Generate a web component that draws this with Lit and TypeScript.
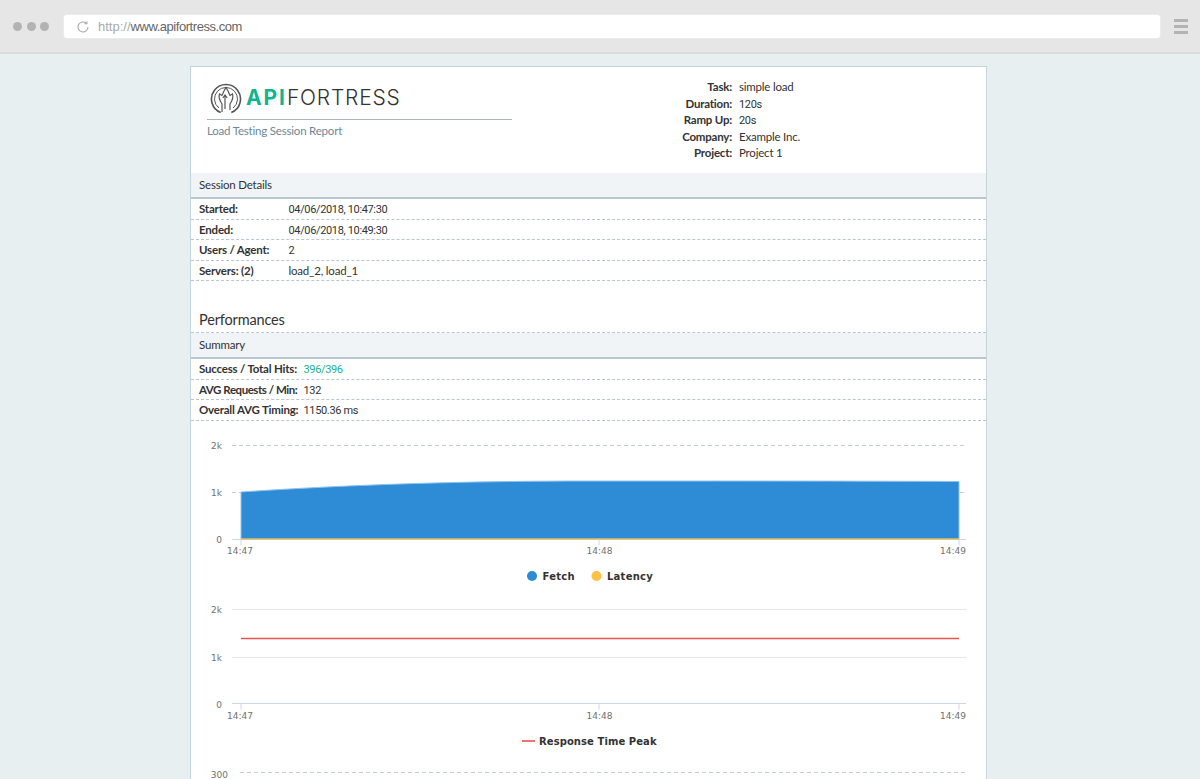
import { LitElement, html, css, svg } from "lit";
import { customElement } from "lit/decorators.js";

const SessionRows = [
  ["Started:", "04/06/2018, 10:47:30", true],
  ["Ended:", "04/06/2018, 10:49:30", true],
  ["Users / Agent:", "2", true],
  ["Servers: (2)", "load_2, load_1", false],
];
const Meta = [
  ["Task:", "simple load", false],
  ["Duration:", "120s", true],
  ["Ramp Up:", "20s", true],
  ["Company:", "Example Inc.", false],
  ["Project:", "Project 1", false],
];

const xTicks = (axisY: number) =>
  [
    [241, "14:47", 240],
    [599, "14:48", 599.5],
    [959, "14:49", 953],
  ].map(
    ([x, label, tx]) => svg`
    <line x1=${x} x2=${x} y1=${axisY} y2=${axisY + 6} stroke="#ccd6eb"/>
    <text class="tick" x=${tx} y=${axisY + 15} text-anchor="middle">${label}</text>`
  );

@customElement("app-root")
export class AppRoot extends LitElement {
  static styles = css`
    :host {
      display: block;
      height: 779px;
      overflow: hidden;
      background: #e7eff1;
      font-family: "Lato", "Open Sans", sans-serif;
    }
    .browser {
      height: 54px;
      box-sizing: border-box;
      background: #e6e6e6;
      border-bottom: 2px solid #dcdcdc;
      display: flex;
      align-items: center;
      padding: 1px 12px 0 13px;
    }
    .dots { display: flex; gap: 4.5px; width: 51px; margin-top: -1px; }
    .dots i { width: 9px; height: 9px; border-radius: 50%; background: #b3b3b3; }
    .url {
      flex: 1;
      height: 23px;
      background: #fff;
      border-radius: 3px;
      box-shadow: 0 0 0 1px #ececec;
      display: flex;
      align-items: center;
      gap: 8px;
      padding-left: 12px;
      font: 13px "Liberation Sans", Arial, sans-serif;
      color: #666;
    }
    .url svg { display: block; }
    .url span { color: #aaa; }
    .url em { font-style: normal; letter-spacing: -0.45px; }
    .burger { width: 14px; margin-left: 14px; display: flex; flex-direction: column; gap: 3px; }
    .burger i { height: 3px; background: #b3b3b3; }
    .report {
      width: 797px;
      box-sizing: border-box;
      margin: 12px 0 0 190px;
      background: #fff;
      border: 1px solid #c5d5da;
      font-size: 11.5px;
      letter-spacing: -0.2px;
      color: #333;
    }
    .top { height: 106px; display: flex; }
    .brand { width: 305px; margin-left: 16px; padding-top: 13px; }
    .logo {
      height: 37px;
      display: flex;
      align-items: center;
      gap: 4px;
      padding: 0 0 2px 3px;
      border-bottom: 1px solid #a9b4ba;
    }
    .word {
      font: 300 21px "Inter", sans-serif;
      letter-spacing: 0.8px;
      color: #333;
      padding-bottom: 3px;
    }
    .word b { font-weight: 700; color: #0fb58f; letter-spacing: 1.9px; }
    .sub { margin-top: 4px; color: #6f8797; }
    .meta {
      margin-left: 144px;
      padding-top: 12px;
      display: grid;
      grid-template-columns: 76px auto;
      column-gap: 7px;
      grid-auto-rows: 16.6px;
      align-content: start;
      align-items: baseline;
      line-height: 16.6px;
    }
    .meta b { text-align: right; }
    .band {
      height: 24px;
      line-height: 24px;
      padding-left: 8px;
      background: #f0f4f7;
      border-bottom: 2px solid #b8c6cd;
    }
    .row {
      height: 20.5px;
      box-sizing: border-box;
      line-height: 19px;
      padding-left: 8px;
      border-bottom: 1px dashed #b8c6cd;
      display: flex;
      align-items: baseline;
    }
    .row b { flex: none; }
    .session b { width: 89.5px; }
    .summary b { width: 104.5px; }
    .summary b.tight { letter-spacing: -0.46px; }
    .num { font-family: "Roboto", sans-serif; font-size: 11px; letter-spacing: -0.35px; }
    .good { color: #15b48f; }
    h2 {
      margin: 0;
      height: 52px;
      box-sizing: border-box;
      padding: 29px 0 0 8px;
      font-size: 14.5px;
      letter-spacing: -0.15px;
      line-height: 20px;
      font-weight: 400;
      color: #333;
      border-bottom: 1px dashed #b8c6cd;
    }
    .charts { display: block; }
    .tick, .ylab { font: 9px "DejaVu Sans", sans-serif; fill: #707070; letter-spacing: 0; }
    .leg { font: bold 10px "DejaVu Sans", sans-serif; fill: #333; letter-spacing: 0.25px; }
    .leg.long { letter-spacing: 0.08px; }
  `;

  render() {
    return html`
      <div class="browser">
        <div class="dots"><i></i><i></i><i></i></div>
        <div class="url">
          <svg width="14" height="14" viewBox="0 0 14 14" fill="none" stroke="#aaa" stroke-width="1.1">
            <path d="M12 7a5 5 0 1 1-1.6-3.7"/>
            <path d="M10.9 1.2v2.6H8.3" />
          </svg>
          <div><span>http://</span><em>www.apifortress.com</em></div>
        </div>
        <div class="burger"><i></i><i></i><i></i></div>
      </div>
      <div class="report">
        <div class="top">
          <div class="brand">
            <div class="logo">
              <svg width="32" height="32" viewBox="0 0 32 32" fill="none" stroke="#555">
                <path d="M10.7 29.5A14.5 14.5 0 1 1 21.3 29.5" stroke-width="1.6"/>
                <path d="M8.9 25A11.5 11.5 0 1 1 23.1 25" stroke-width="1"/>
                <path d="M12 29V21C10 18 8 15 9.5 11L12 12.5 14 8 16 4.5 18 8 20 12.5 22.5 11C24 15 22 18 20 21V27" stroke-width="1.2"/>
                <path d="M15 26V12M12.8 15 15 12 17.2 15" stroke-width="1.2"/>
              </svg>
              <div class="word"><b>API</b>FORTRESS</div>
            </div>
            <div class="sub">Load Testing Session Report</div>
          </div>
          <div class="meta">
            ${Meta.map(
              ([k, v, n]) => html`<b>${k}</b><span class=${n ? "num" : ""}>${v}</span>`
            )}
          </div>
        </div>
        <div class="band">Session Details</div>
        ${SessionRows.map(
          ([k, v, n]) =>
            html`<div class="row session"><b>${k}</b><span class=${n ? "num" : ""}>${v}</span></div>`
        )}
        <h2>Performances</h2>
        <div class="band">Summary</div>
        <div class="row summary"><b>Success / Total Hits:</b><span class="num good">396/396</span></div>
        <div class="row summary"><b class="tight">AVG Requests / Min:</b><span class="num">132</span></div>
        <div class="row summary"><b>Overall AVG Timing:</b><span class="num">1150.36 ms</span></div>
        ${this.charts()}
      </div>
    `;
  }

  charts() {
    return html`<svg class="charts" width="795" height="360" viewBox="191 421 795 360">
      <line x1="232" x2="966" y1="445.5" y2="445.5" stroke="#c4cdd2" stroke-dasharray="4 3"/>
      <line x1="232" x2="966" y1="492.5" y2="492.5" stroke="#c4cdd2" stroke-dasharray="4 3"/>
      <path d="M241 492C330 486 440 481 590 481C720 481 850 481 959 481.5V539H241Z" fill="#2e8cd7"/>
      <path d="M241 539V492C330 486 440 481 590 481C720 481 850 481 959 481.5V539" fill="none" stroke="#8fc2ee" stroke-width="1"/>
      <line x1="232" x2="966" y1="539.5" y2="539.5" stroke="#ccd6eb"/>
      <line x1="241" x2="959" y1="539" y2="539" stroke="#e3c15c" stroke-width="1.5"/>
      ${xTicks(539)}
      <text class="ylab" x="222" y="449" text-anchor="end">2k</text>
      <text class="ylab" x="222" y="496" text-anchor="end">1k</text>
      <text class="ylab" x="222" y="543" text-anchor="end">0</text>
      <circle cx="532" cy="576" r="5" fill="#2e8cd7"/>
      <text class="leg" x="542.5" y="580">Fetch</text>
      <circle cx="596.5" cy="576" r="5" fill="#fdc144"/>
      <text class="leg" x="607" y="580">Latency</text>

      <line x1="232" x2="966" y1="609.5" y2="609.5" stroke="#e6e6e6"/>
      <line x1="232" x2="966" y1="657.5" y2="657.5" stroke="#e6e6e6"/>
      <line x1="232" x2="966" y1="703.5" y2="703.5" stroke="#ccd6eb"/>
      <line x1="241" x2="959" y1="638.5" y2="638.5" stroke="#e8534a" stroke-width="1.6"/>
      ${xTicks(703.5)}
      <text class="ylab" x="222" y="613" text-anchor="end">2k</text>
      <text class="ylab" x="222" y="661" text-anchor="end">1k</text>
      <text class="ylab" x="222" y="708" text-anchor="end">0</text>
      <line x1="522" x2="535" y1="741" y2="741" stroke="#e8534a" stroke-width="1.6"/>
      <text class="leg long" x="539" y="744.5">Response Time Peak</text>
      <line x1="240" x2="966" y1="772.5" y2="772.5" stroke="#c4cdd2" stroke-dasharray="4 3"/>
      <text class="ylab" x="228" y="778" text-anchor="end">300</text>
    </svg>`;
  }
}
